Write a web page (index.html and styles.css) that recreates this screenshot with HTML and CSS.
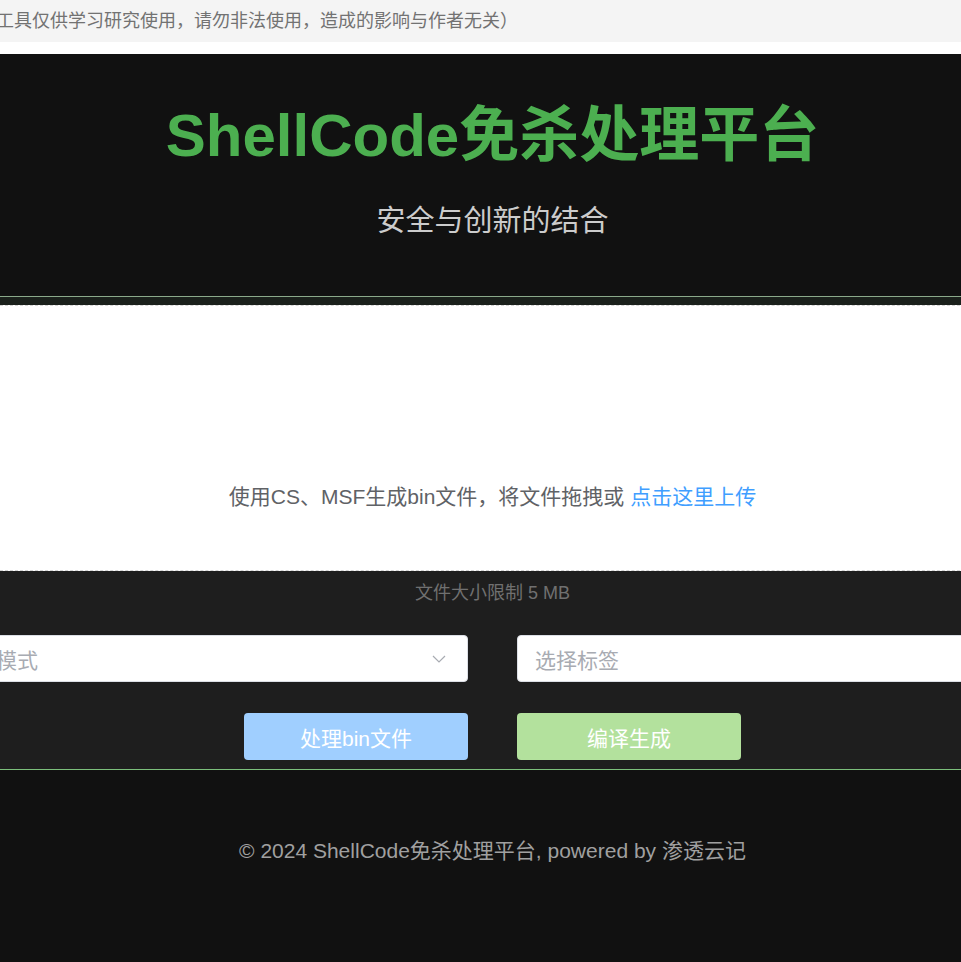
FILE: index.html
```html
<!DOCTYPE html>
<html lang="zh-CN">
  <head>
    <meta charset="utf-8">
    <title>ShellCode免杀处理平台</title>
    <link rel="stylesheet" href="styles.css">
  </head>
  <body>
    <div class="page">
      <div class="notice">（本工具仅供学习研究使用，请勿非法使用，造成的影响与作者无关）</div>

      <header class="hero">
        <h1>ShellCode免杀处理平台</h1>
        <p>安全与创新的结合</p>
      </header>

      <div class="upload-wrap">
        <div class="upload">
          使用CS、MSF生成bin文件，将文件拖拽或 <a href="#">点击这里上传</a>
        </div>
      </div>

      <section class="tools">
        <div class="limit">文件大小限制 5 MB</div>
        <div class="fields">
          <div class="select">
            <span>请选择模式</span>
            <svg width="14" height="8" viewBox="0 0 14 8"><polyline points="1,1 7,7 13,1" fill="none" stroke="#a8abb2" stroke-width="1.2"/></svg>
          </div>
          <div class="input"><span>选择标签</span></div>
        </div>
        <div class="buttons">
          <button class="btn blue">处理bin文件</button>
          <button class="btn green">编译生成</button>
        </div>
      </section>

      <footer class="foot">© 2024 ShellCode免杀处理平台, powered by 渗透云记</footer>
    </div>
  </body>
</html>
```

FILE: styles.css
```css
html {
  overflow: hidden;
}

body {
  margin: 0;
  background: #fff;
  font-family: "Liberation Sans", "Noto Sans CJK SC", sans-serif;
}

.page {
  width: 985px;
}

/* notice line is wider than the window, its start is cut off */
.notice {
  height: 42px;
  line-height: 42px;
  margin-left: -40px;
  margin-bottom: 12px;
  background: #f4f4f4;
  color: #727272;
  font-size: 18px;
  white-space: nowrap;
}

.hero {
  background: #111;
  text-align: center;
  padding: 52px 0 54px;
  border-bottom: 1px solid #8aa98a;
}

.hero h1 {
  margin: 0;
  font-size: 60px;
  line-height: 60px;
  color: #4caf50;
  font-weight: bold;
}

.hero p {
  margin: 34px 0 0;
  font-size: 29px;
  line-height: 42px;
  color: #ccc;
}

.upload-wrap {
  background: #1a201b;
  padding-top: 8px;
}

.upload {
  background: #fff;
  border-top: 1px dashed #d4d4d4;
  border-bottom: 1px dashed #d4d4d4;
  padding: 176px 0 58px;
  text-align: center;
  font-size: 21px;
  line-height: 30px;
  color: #606266;
}

.upload a {
  color: #409eff;
  text-decoration: none;
}

.tools {
  background: #1e1e1e;
  padding: 9px 0 9px;
  border-bottom: 1px solid #7cbf7c;
}

.limit {
  text-align: center;
  font-size: 18px;
  line-height: 26px;
  color: #707070;
}

.fields {
  display: flex;
  gap: 49px;
  margin: 29px -80px 0;
}

.select, .input {
  flex: 0 0 548px;
  height: 47px;
  box-sizing: border-box;
  display: flex;
  align-items: center;
  justify-content: space-between;
  padding: 0 21px 0 12px;
  background: #fff;
  border: 1px solid #dcdfe6;
  border-radius: 4px;
  font-size: 21px;
  color: #a8abb2;
}

.input {
  padding-left: 17px;
}

.buttons {
  display: flex;
  justify-content: center;
  gap: 49px;
  margin-top: 31px;
}

.btn {
  width: 224px;
  height: 47px;
  border: none;
  border-radius: 4px;
  color: #fff;
  font-family: inherit;
  font-size: 21px;
}

.btn.blue {
  background: #a0cfff;
}

.btn.green {
  background: #b3e19d;
}

.foot {
  background: #111;
  text-align: center;
  padding: 66px 0 140px;
  font-size: 21px;
  line-height: 30px;
  color: #a0a0a0;
}
```
